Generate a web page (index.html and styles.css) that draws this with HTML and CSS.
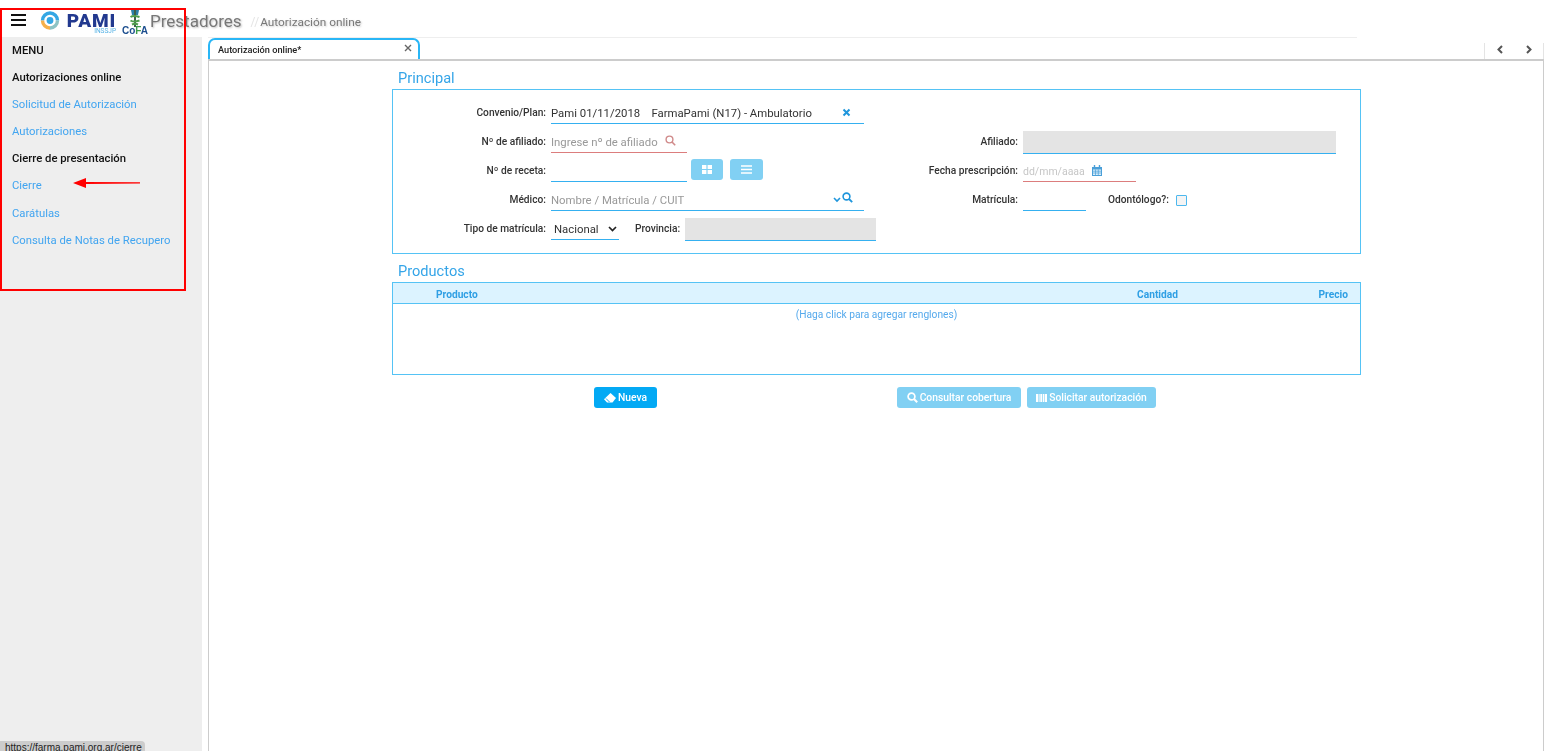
FILE: index.html
```html
<!DOCTYPE html>
<html lang="es">
<head>
<meta charset="UTF-8">
<title>Prestadores - Autorización online</title>
<link rel="stylesheet" href="styles.css">
</head>
<body>
    <header class="topbar">
        <svg class="burger" width="15" height="12" viewBox="0 0 15 12"><path d="M0 1h15M0 6h15M0 11h15" stroke="#111" stroke-width="2.200"/></svg>
        <svg class="pami-mark" width="20" height="19" viewBox="0 0 20 19">
            <path d="M2.500 9.500A7.500 7.500 0 0 1 17.500 9.500" fill="none" stroke="#35a7e4" stroke-width="3.400"/>
            <path d="M2.500 9.500A7.500 7.500 0 0 0 10 17" fill="none" stroke="#f6b04a" stroke-width="3.400"/>
            <path d="M10 17A7.500 7.500 0 0 0 17.500 9.500" fill="none" stroke="#8cc3c4" stroke-width="3.400"/>
            <circle cx="10" cy="9.500" r="3.400" fill="#35a7e4"/>
        </svg>
        <div class="pami-name">
            <span class="pami-word">PAMI</span>
            <span class="pami-sub">INSSJP</span>
        </div>
        <div class="cofa">
            <svg width="14" height="18" viewBox="0 0 14 18">
                <path d="M3 1h8l-1 5H4z" fill="#2c7fa8"/>
                <path d="M7 0v18" stroke="#3d5f4a" stroke-width="2"/>
                <path d="M2.500 8c3-2 6-1 9 0M2.500 11.500c3 2 6 1 9 0M4 15.500c2-1 4-1 6 0" fill="none" stroke="#4f9d4c" stroke-width="2"/>
            </svg>
            <span class="cofa-word">Co<i>F</i>A</span>
        </div>
        <span class="app-title">Prestadores</span>
        <span class="crumb-sep">//</span>
        <span class="crumb">Autorización online</span>
    </header>

    <div class="layout">
        <!-- Menu lateral -->
        <nav class="sidebar">
            <div class="menu-title">MENU</div>
            <div class="menu-head">Autorizaciones online</div>
            <a class="menu-link">Solicitud de Autorización</a>
            <a class="menu-link">Autorizaciones</a>
            <div class="menu-head">Cierre de presentación</div>
            <a class="menu-link">Cierre</a>
            <a class="menu-link">Carátulas</a>
            <a class="menu-link">Consulta de Notas de Recupero</a>
        </nav>

        <main class="main">
            <div class="top-line"></div>
            <div class="tabstrip">
                <div class="tab">
                    <span>Autorización online*</span>
                    <svg class="tab-close" width="8" height="8" viewBox="0 0 8 8"><path d="M1 1l6 6M7 1L1 7" stroke="#666" stroke-width="1.400"/></svg>
                </div>
                <div class="tab-arrows">
                    <svg width="6" height="9" viewBox="0 0 6 9"><path d="M5 1L1.500 4.500 5 8" fill="none" stroke="#555" stroke-width="2"/></svg>
                    <svg width="6" height="9" viewBox="0 0 6 9"><path d="M1 1l3.500 3.500L1 8" fill="none" stroke="#555" stroke-width="2"/></svg>
                </div>
            </div>

            <div class="panel">
                <h2 class="section-title">Principal</h2>
                <section class="box form-box">
                    <div class="row">
                        <label class="lbl">Convenio/Plan:</label>
                        <div class="field w-full"><span class="val">Pami 01/11/2018 &nbsp;&nbsp; FarmaPami (N17) - Ambulatorio</span>
                            <svg class="ico-x" width="9" height="9" viewBox="0 0 9 9"><path d="M1.500 1.500l6 6M7.500 1.500l-6 6" stroke="#1f96dc" stroke-width="2"/></svg>
                        </div>
                    </div>
                    <div class="row">
                        <label class="lbl">Nº de afiliado:</label>
                        <div class="cell"><div class="field w-short invalid"><span class="hint">Ingrese nº de afiliado</span>
                            <svg class="ico-search" width="11" height="11" viewBox="0 0 11 11"><circle cx="4.500" cy="4.500" r="3.400" fill="none" stroke="#d08a8a" stroke-width="1.400"/><path d="M7 7l3.200 3.200" stroke="#d08a8a" stroke-width="1.600"/></svg>
                        </div></div>
                        <label class="lbl lbl-right">Afiliado:</label>
                        <div class="field w-full off"></div>
                    </div>
                    <div class="row">
                        <label class="lbl">Nº de receta:</label>
                        <div class="cell">
                            <div class="field w-short"></div>
                            <button class="mini-btn first">
                                <svg width="10" height="9" viewBox="0 0 10 9"><path d="M0 0h4.400v4H0zM5.600 0H10v4H5.600zM0 5h4.400v4H0zM5.600 5H10v4H5.600z" fill="#fff"/></svg>
                            </button>
                            <button class="mini-btn">
                                <svg width="11" height="9" viewBox="0 0 11 9"><path d="M0 1h11M0 4.500h11M0 8h11" stroke="#fff" stroke-width="1.400"/></svg>
                            </button>
                        </div>
                        <label class="lbl lbl-right">Fecha prescripción:</label>
                        <div class="cell"><div class="field w-date invalid"><span class="hint light">dd/mm/aaaa</span>
                            <svg class="ico-cal" width="10" height="11" viewBox="0 0 10 11"><path d="M0 2h10v9H0z" fill="#4a9fd8"/><path d="M2.500 0v3M7.500 0v3" stroke="#4a9fd8" stroke-width="1.400"/><path d="M1 4.500h8V10H1z" fill="#d9eefa"/><path d="M1 6.200h8M1 8h8M3.500 4.500V10M6.300 4.500V10" stroke="#4a9fd8" stroke-width=".7"/></svg>
                        </div></div>
                    </div>
                    <div class="row">
                        <label class="lbl">Médico:</label>
                        <div class="field w-full"><span class="hint gray">Nombre / Matrícula / CUIT</span>
                            <svg class="ico-chev" width="8" height="6" viewBox="0 0 8 6"><path d="M1 1l3 3 3-3" fill="none" stroke="#1f96dc" stroke-width="1.600"/></svg>
                            <svg class="ico-search blue" width="11" height="11" viewBox="0 0 11 11"><circle cx="4.500" cy="4.500" r="3.400" fill="none" stroke="#1f96dc" stroke-width="1.600"/><path d="M7 7l3.200 3.200" stroke="#1f96dc" stroke-width="1.800"/></svg>
                        </div>
                        <label class="lbl lbl-right">Matrícula:</label>
                        <div class="cell">
                            <div class="field w-mat"></div>
                            <label class="lbl-check">Odontólogo?:</label>
                            <span class="check"></span>
                        </div>
                    </div>
                    <div class="row">
                        <label class="lbl">Tipo de matrícula:</label>
                        <div class="cell">
                            <div class="field w-select"><span class="val">Nacional</span>
                                <svg class="ico-chev dark" width="9" height="6" viewBox="0 0 9 6"><path d="M1 1l3.500 3.500L8 1" fill="none" stroke="#222" stroke-width="1.700"/></svg>
                            </div>
                            <label class="lbl-prov">Provincia:</label>
                            <div class="field w-prov off"></div>
                        </div>
                    </div>
                </section>

                <h2 class="section-title second">Productos</h2>
                <section class="box grid-box">
                    <div class="grid-head">
                        <span class="col-prod">Producto</span>
                        <span class="col-cant">Cantidad</span>
                        <span class="col-precio">Precio</span>
                    </div>
                    <div class="grid-empty">(Haga click para agregar renglones)</div>
                </section>

                <div class="actions">
                    <button class="btn">
                        <svg width="12" height="10" viewBox="0 0 12 10"><path d="M6.500 0L12 5 8.500 9.500H3L0 6.200z" fill="#fff"/><path d="M2 5.500l3.500 3.500" stroke="#03a9f4" stroke-width="1"/></svg>
                        Nueva
                    </button>
                    <button class="btn off push">
                        <svg width="11" height="11" viewBox="0 0 11 11"><circle cx="4.500" cy="4.500" r="3.400" fill="none" stroke="#fff" stroke-width="1.700"/><path d="M7 7l3.200 3.200" stroke="#fff" stroke-width="2"/></svg>
                        Consultar cobertura
                    </button>
                    <button class="btn off">
                        <svg width="11" height="8" viewBox="0 0 11 8"><path d="M0 0h2v8H0zM2.600 0h1v8h-1zM4.300 0h2v8h-2zM7 0h1v8H7zM8.600 0H11v8H8.600z" fill="#fff"/></svg>
                        Solicitar autorización
                    </button>
                </div>
            </div>
        </main>
    </div>

    <!-- Anotacion sobre la captura -->
    <div class="red-box"></div>
    <svg class="red-arrow" width="68" height="10" viewBox="0 0 68 10"><path d="M0 5l13-5v4l54 .2v1.200L13 6v4z" fill="#f00"/></svg>
    <div class="status">https://farma.pami.org.ar/cierre</div>
</body>
</html>
```

FILE: styles.css
```css
* {
    box-sizing: border-box;
}

html, body {
    margin: 0;
    height: 751px;
    overflow: hidden;
}

body {
    display: flex;
    flex-direction: column;
    font-family: Roboto, "Liberation Sans", sans-serif;
    background-color: #fff;
    color: #222;
    position: relative;
}

/* Header */
.topbar {
    display: flex;
    align-items: flex-start;
    height: 37px;
    flex: none;
    filter: blur(0.35px);
}

.burger {
    margin: 14px 0 0 11px;
}

.pami-mark {
    margin: 11px 0 0 14px;
}

.pami-name {
    margin-left: 6px;
    width: 50px;
    display: flex;
    flex-direction: column;
    align-items: flex-end;
}

.pami-word {
    font-weight: 900;
    font-size: 19px;
    line-height: 15px;
    letter-spacing: 0.800px;
    margin-top: 13px;
    color: #22398f;
}

.pami-sub {
    font-size: 6.500px;
    line-height: 6px;
    color: #5ab4e6;
}

.cofa {
    display: flex;
    flex-direction: column;
    align-items: center;
    width: 24px;
    margin: 9px 0 0 7px;
}

.cofa-word {
    font-family: "Liberation Sans", sans-serif;
    font-weight: 700;
    font-size: 10px;
    line-height: 8px;
    color: #1d4f8f;
}

.cofa-word i {
    font-style: normal;
    color: #3f9d4a;
}

.app-title {
    margin: 11px 0 0 3px;
    font-size: 17px;
    line-height: 20px;
    color: #777;
    text-shadow: 1px 1px 2px rgba(0, 0, 0, 0.25);
}

.crumb-sep {
    margin: 15px 0 0 9px;
    font-size: 12px;
    line-height: 14px;
    color: #e4e4e4;
}

.crumb {
    margin: 15px 0 0 1px;
    font-size: 11.800px;
    line-height: 15px;
    color: #777;
    text-shadow: 1px 1px 2px rgba(0, 0, 0, 0.2);
}

.layout {
    display: flex;
    flex: 1;
    min-height: 0;
    filter: blur(0.35px);
}

/* Sidebar */
.sidebar {
    width: 202px;
    flex: none;
    padding: 0 0 0 12px;
    background-color: #eee;
    font-size: 11.300px;
}

.menu-title,
.menu-head,
.menu-link {
    display: block;
    height: 27.100px;
    line-height: 27px;
}

.menu-title,
.menu-head {
    font-weight: 500;
    color: #111;
}

.menu-link {
    color: #42a5f0;
}

/* Main */
.main {
    width: 1336px;
    margin-left: 6px;
    display: flex;
    flex-direction: column;
}

.top-line {
    width: 1149px;
    height: 1px;
    background-color: #eee;
}

.tabstrip {
    display: flex;
    justify-content: space-between;
    align-items: flex-end;
    height: 23px;
    border-bottom: 2px solid #ccc;
    flex: none;
}

.tab {
    display: flex;
    justify-content: space-between;
    align-items: center;
    width: 212px;
    height: 21px;
    padding: 0 6px 0 8px;
    border: 2px solid #29b6f6;
    border-bottom: 0;
    border-radius: 7px 7px 0 0;
    font-size: 9.200px;
    font-weight: 500;
    color: #222;
}

.tab-close {
    margin-bottom: 3px;
}

.tab-arrows {
    display: flex;
    justify-content: space-around;
    align-items: center;
    width: 60px;
    height: 16px;
    padding-bottom: 4px;
    border-left: 1px solid #e4e4e4;
    border-right: 1px solid #e4e4e4;
}

.panel {
    flex: 1;
    padding-left: 183px;
    border-left: 1px solid #ccc;
    border-right: 1px solid #ccc;
}

.section-title {
    margin: 0 0 0 6px;
    height: 28px;
    font-size: 14.600px;
    font-weight: 400;
    line-height: 34px;
    color: #35a5e8;
}

.section-title.second {
    height: 28px;
    line-height: 35px;
}

.box {
    width: 969px;
    border: 1px solid #55c3f5;
}

/* Formulario */
.form-box {
    height: 165px;
    padding-top: 8px;
}

.row {
    display: grid;
    grid-template-columns: 153px 318px 154px 318px;
    height: 29px;
    font-size: 10.200px;
}

.lbl {
    font-weight: 500;
    text-align: right;
    line-height: 30px;
    color: #333;
}

.lbl-right {
    grid-column: 3;
}

.cell {
    display: flex;
    margin-left: 5px;
}

.row > .field {
    margin-left: 5px;
}

.field {
    position: relative;
    height: 26px;
    flex: none;
    border-bottom: 1px solid #35b0f0;
    font-size: 11.350px;
    line-height: 31px;
}

.w-full {
    width: 313px;
}

.w-short {
    width: 136px;
}

.w-date {
    width: 113px;
}

.w-mat {
    width: 63px;
}

.w-select {
    width: 68px;
    padding-left: 3px;
}

.w-prov {
    width: 191px;
    height: 23px;
    margin-top: 4px;
}

.field.off {
    background-color: #e4e4e4;
}

.row > .field.off {
    height: 23px;
    margin-top: 4px;
}

.field.invalid {
    border-bottom-color: #dc7d7d;
}

.val {
    color: #333;
}

.hint {
    color: #999;
}

.hint.light {
    font-size: 10.500px;
    color: #c6c6c6;
}

.ico-x,
.ico-search,
.ico-chev,
.ico-cal {
    position: absolute;
}

.ico-x {
    right: 13px;
    top: 10px;
}

.ico-search {
    right: 11px;
    top: 8px;
}

.ico-search.blue {
    right: 11px;
    top: 7px;
}

.ico-chev {
    right: 23px;
    top: 12px;
}

.ico-chev.dark {
    right: 2px;
}

.ico-cal {
    right: 34px;
    top: 9px;
}

.mini-btn {
    width: 33px;
    height: 21px;
    margin: 3px 0 0 7px;
    padding: 0;
    border: 0;
    border-radius: 3px;
    background-color: #81d0f3;
}

.mini-btn.first {
    width: 32px;
    margin-left: 4px;
}

.lbl-check {
    margin-left: 22px;
    width: 60px;
    font-weight: 500;
    line-height: 30px;
    white-space: nowrap;
    color: #333;
}

.check {
    width: 11px;
    height: 11px;
    margin: 10px 0 0 8px;
    border: 1px solid #4db8ee;
    border-radius: 1px;
    background-color: #f4f4f4;
}

.lbl-prov {
    flex: none;
    margin-left: 16px;
    width: 50px;
    font-weight: 500;
    line-height: 30px;
    color: #333;
}

/* Tabla productos */
.grid-box {
    height: 93px;
}

.grid-head {
    display: flex;
    height: 21px;
    background-color: #dcf3ff;
    border-bottom: 1px solid #55c3f5;
    font-size: 10.200px;
    font-weight: 700;
    line-height: 23px;
    color: #2f9fe4;
}

.col-prod {
    margin-left: 43px;
}

.col-cant {
    margin-left: auto;
}

.col-precio {
    width: 182px;
    padding-right: 12px;
    text-align: right;
}

.grid-empty {
    font-size: 10.200px;
    line-height: 21px;
    text-align: center;
    color: #55a9ec;
}

/* Botones */
.actions {
    display: flex;
    width: 969px;
    margin-top: 12px;
    padding-left: 202px;
}

.btn {
    display: flex;
    align-items: center;
    justify-content: center;
    gap: 2px;
    height: 21px;
    padding: 0;
    border: 0;
    border-radius: 3px;
    background-color: #03a9f4;
    color: #fff;
    font-family: inherit;
    font-size: 10.300px;
    font-weight: 500;
    white-space: nowrap;
    margin-left: 6px;
}

.btn:first-child {
    width: 63px;
    margin-left: 0;
}

.btn.off {
    background-color: #81d0f3;
    width: 129px;
}

.btn.push {
    width: 124px;
    margin-left: 240px;
}

/* Anotaciones */
.red-box {
    position: absolute;
    left: 0;
    top: 8px;
    width: 186px;
    height: 283px;
    border: 2px solid #f00;
}

.red-arrow {
    position: absolute;
    left: 73px;
    top: 178px;
}

.status {
    position: absolute;
    left: 0;
    top: 741px;
    width: 145px;
    height: 14px;
    padding-left: 5px;
    border-radius: 0 4px 0 0;
    background-color: #ccc;
    font-family: "Liberation Sans", sans-serif;
    font-size: 10px;
    line-height: 14px;
    color: #222;
}
```
